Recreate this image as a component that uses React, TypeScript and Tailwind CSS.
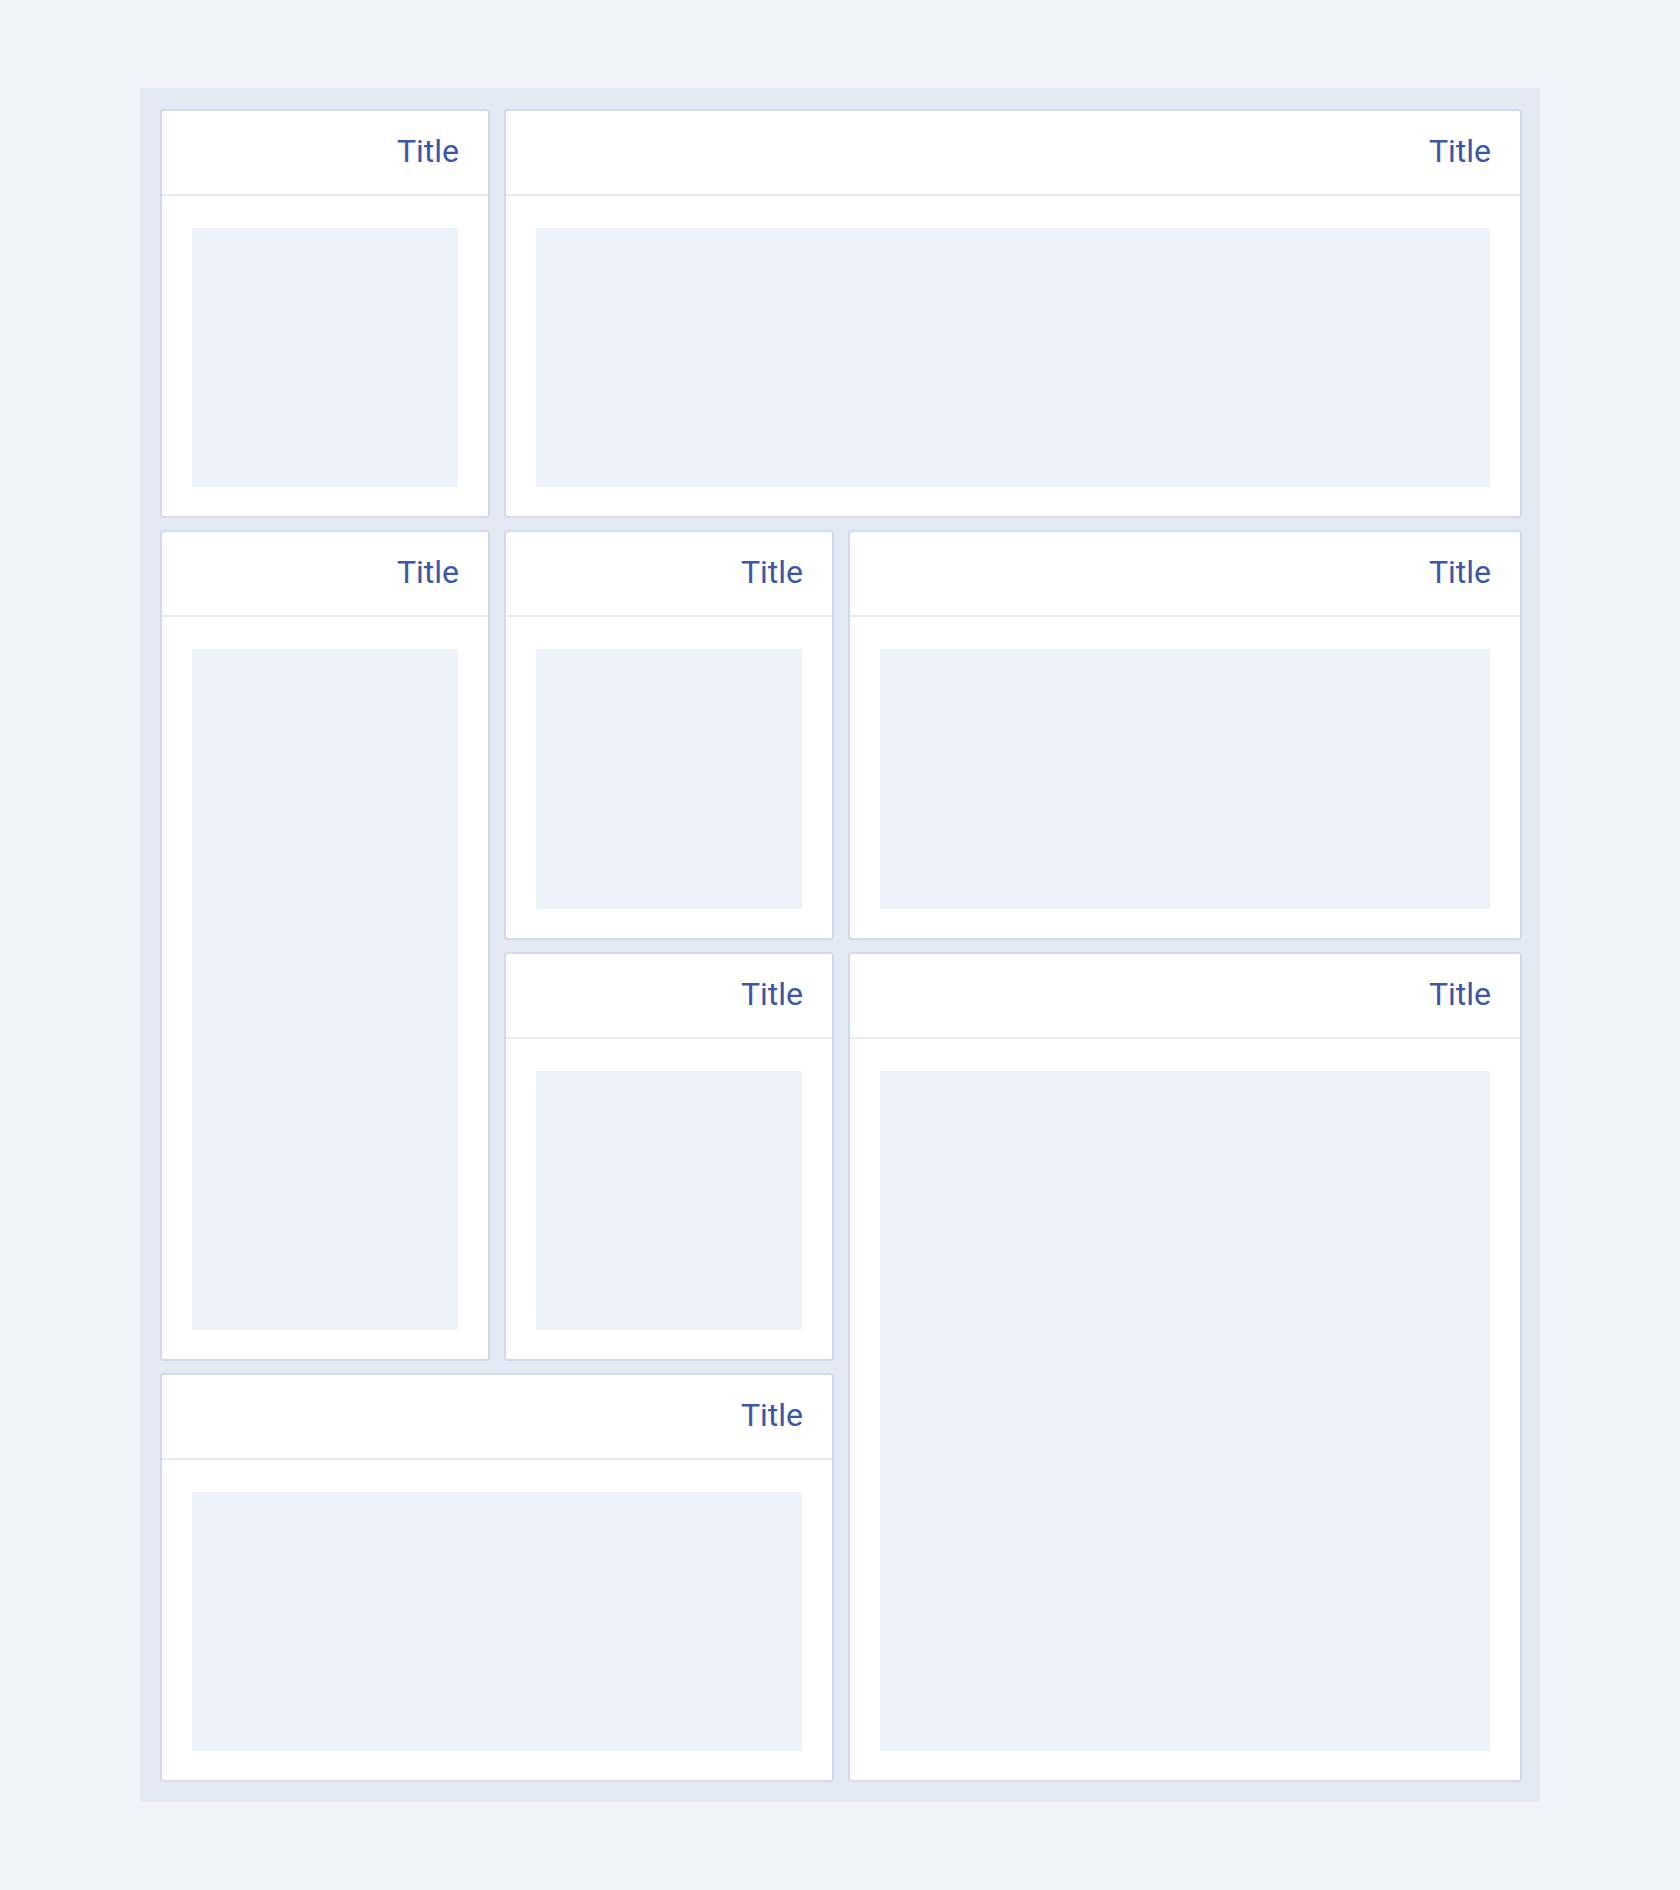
import React from "react";

function Card({ className }: { className: string }) {
  return (
    <div
      className={`flex flex-col bg-white border-2 border-[#d1d9ed] rounded-[4px] overflow-hidden ${className}`}
    >
      <div className="h-[85px] shrink-0 flex items-center justify-end pr-[29px] pb-[3px] border-b-2 border-[#e9eaee]">
        <span
          className="text-[32px] leading-none text-[#3b56ad]"
          style={{ fontFamily: "Roboto, 'Liberation Sans', sans-serif" }}
        >
          Title
        </span>
      </div>
      <div className="flex-1 flex pt-8 px-[30px] pb-[29px]">
        <div className="flex-1 bg-[#eef2fb]" />
      </div>
    </div>
  );
}

export default function App() {
  return (
    <div className="min-h-[1890px] w-full bg-[#f0f4fa] pt-[88px]">
      <div className="mx-auto w-[1400px] h-[1714px] bg-[#e3eaf4] pt-[21px] pl-5 pr-[18px] pb-5 grid grid-cols-4 grid-rows-4 gap-x-[14px] gap-y-3">
        <Card className="col-start-1 row-start-1" />
        <Card className="col-start-2 col-span-3 row-start-1" />
        <Card className="col-start-1 row-start-2 row-span-2" />
        <Card className="col-start-2 row-start-2" />
        <Card className="col-start-3 col-span-2 row-start-2" />
        <Card className="col-start-2 row-start-3" />
        <Card className="col-start-3 col-span-2 row-start-3 row-span-2" />
        <Card className="col-start-1 col-span-2 row-start-4" />
      </div>
    </div>
  );
}
